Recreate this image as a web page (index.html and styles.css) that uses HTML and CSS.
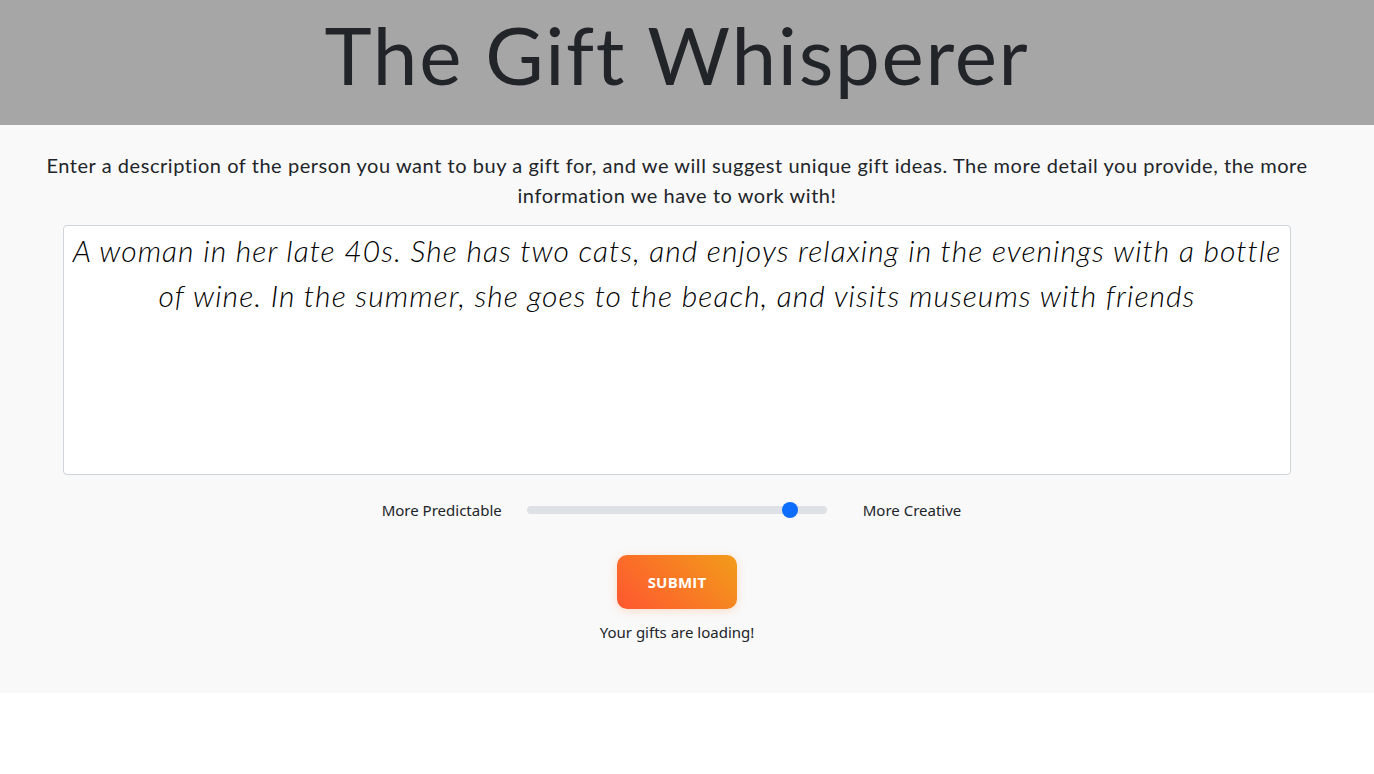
FILE: index.html
```html
<!DOCTYPE html>
<html lang="en">
<head>
<meta charset="utf-8">
<title>The Gift Whisperer</title>
<link rel="stylesheet" href="styles.css">
</head>
<body>
<header class="site-header">
  <h1 class="title">The Gift Whisperer</h1>
</header>
<main class="main">
  <p class="intro">Enter a description of the person you want to buy a gift for, and we will suggest unique gift ideas. The more detail you provide, the more information we have to work with!</p>
  <textarea class="desc">A woman in her late 40s. She has two cats, and enjoys relaxing in the evenings with a bottle of wine. In the summer, she goes to the beach, and visits museums with friends</textarea>
  <div class="slider-row">
    <span class="lbl lbl-left">More Predictable</span>
    <input class="range" type="range" min="0" max="1" step="0.1" value="0.9">
    <span class="lbl lbl-right">More Creative</span>
  </div>
  <button class="submit">SUBMIT</button>
  <p class="loading">Your gifts are loading!</p>
</main>
</body>
</html>
```
FILE: styles.css
```css
* { box-sizing: border-box; }
html, body { margin: 0; padding: 0; background: #ffffff; }
body { color: #212529; }

.site-header {
  background: #a6a6a6;
  height: 125px;
  padding-right: 20px;
  display: flex;
  align-items: center;
  justify-content: center;
}
.title {
  margin: 0;
  font-family: "Lato", sans-serif;
  font-weight: 400;
  font-size: 80px;
  letter-spacing: 1.7px;
  line-height: 1;
  color: #212529;
  position: relative;
  top: -9px;
}

.main {
  background: #f9f9f9;
  height: 568px;
  padding: 25px 20px 0 0;
  display: flex;
  flex-direction: column;
  align-items: center;
}
.intro {
  margin: 0;
  width: 1290px;
  font-family: "Lato", sans-serif;
  font-size: 20px;
  letter-spacing: 0.55px;
  line-height: 30px;
  text-align: center;
  color: #212529;
}
.desc {
  margin-top: 15px;
  width: 1228px;
  height: 250px;
  border: 1px solid #ced4da;
  border-radius: 4px;
  background: #ffffff;
  padding: 2px 6px;
  font-family: "Lato", sans-serif;
  font-style: italic;
  font-weight: 300;
  font-size: 30px;
  letter-spacing: 1.05px;
  line-height: 45px;
  text-align: center;
  color: #000000;
  resize: none;
  overflow: hidden;
}
.slider-row {
  margin-top: 23px;
  display: flex;
  align-items: center;
  height: 24px;
  padding-right: 11px;
}
.lbl {
  font-family: "Noto Sans", sans-serif;
  font-size: 15px;
  color: #212529;
}
.lbl-left { margin-right: 25px; }
.lbl-right { margin-left: 36px; }
.range {
  -webkit-appearance: none;
  appearance: none;
  width: 300px;
  height: 16px;
  margin: 0;
  background: transparent;
}
.range::-webkit-slider-runnable-track {
  height: 8px;
  background: #dee2e6;
  border-radius: 4px;
}
.range::-webkit-slider-thumb {
  -webkit-appearance: none;
  width: 16px;
  height: 16px;
  border-radius: 50%;
  background: #0d6efd;
  margin-top: -4px;
  border: 0;
}
.submit {
  margin-top: 33px;
  width: 120px;
  height: 54px;
  border: 0;
  border-radius: 10px;
  background: linear-gradient(45deg, #ff5630 0%, #f29c1a 100%);
  box-shadow: 0 2px 10px rgba(255, 140, 60, 0.25);
  color: #ffffff;
  font-family: "Open Sans", sans-serif;
  font-weight: 700;
  font-size: 15px;
  letter-spacing: 0.2px;
}
.loading {
  margin: 12px 0 0;
  font-family: "Noto Sans", sans-serif;
  font-size: 15px;
  line-height: 22px;
  color: #212529;
}
```
